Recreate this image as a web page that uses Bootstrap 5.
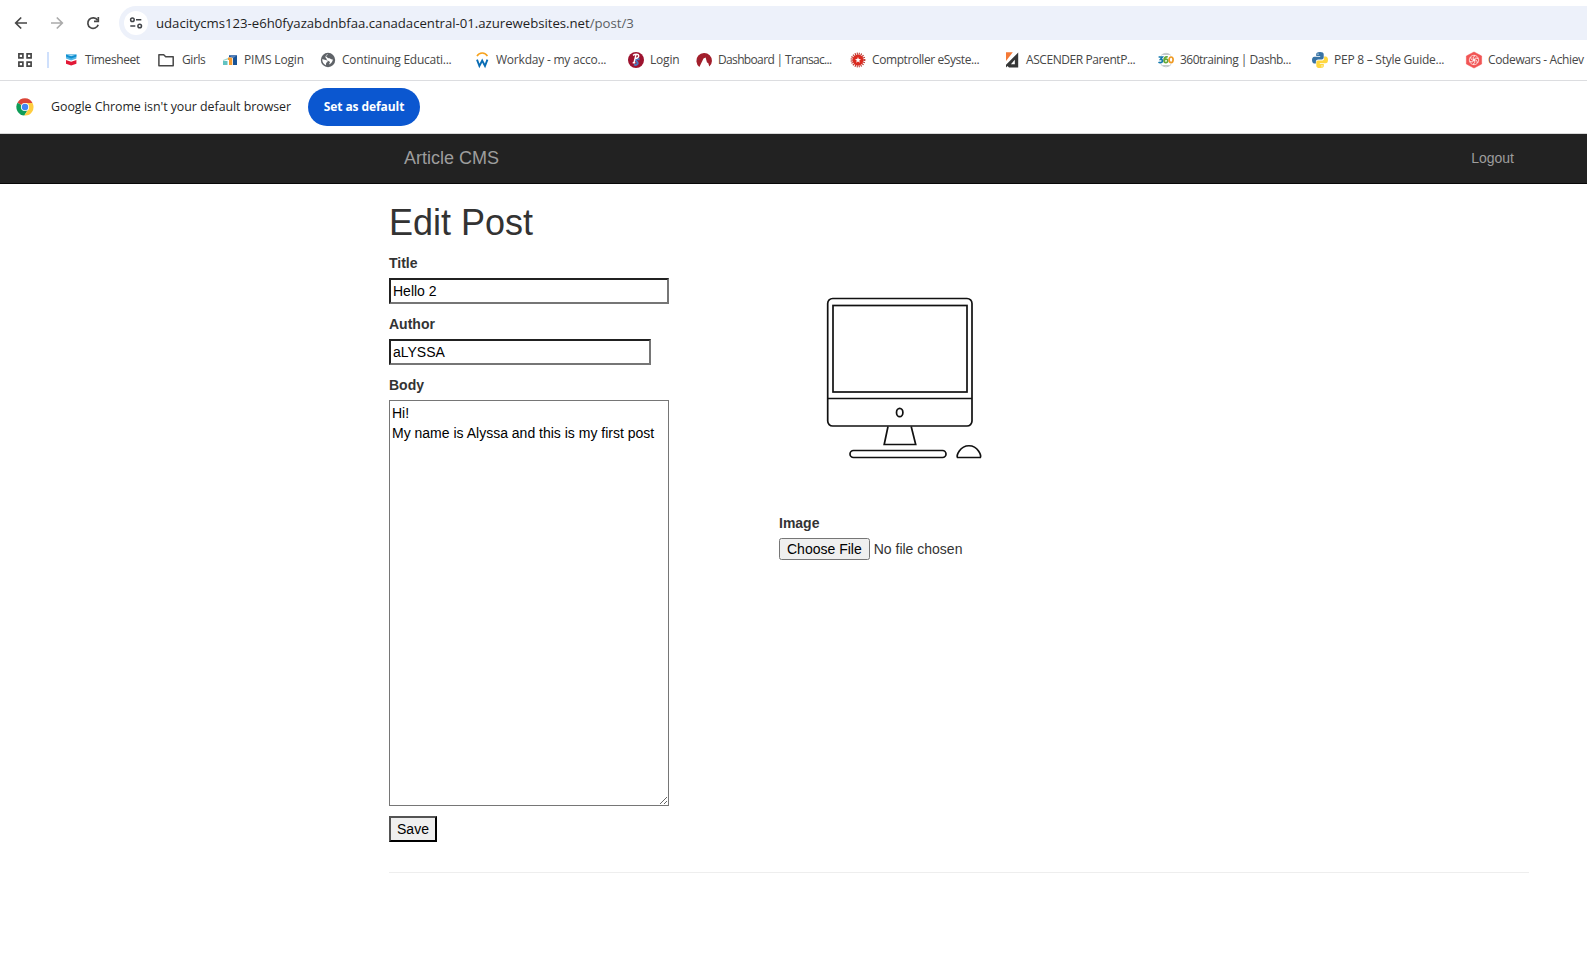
<!DOCTYPE html>
<html lang="en">
<head>
<meta charset="utf-8">
<meta name="viewport" content="width=device-width, initial-scale=1">
<title>Edit Post</title>
<link href="https://cdn.jsdelivr.net/npm/bootstrap@5.3.0/dist/css/bootstrap.min.css" rel="stylesheet">
<style>
body{font-family:"Liberation Sans",Arial,sans-serif;font-size:14px;line-height:20px;color:#333;background:#fff;overflow:hidden}
svg{display:block;overflow:visible;flex:none}
.chrome-ui{font-family:"Open Sans","Noto Sans",sans-serif;color:#1f1f1f}
.toolbar{height:46px;padding:0 0 0 14px}
.nav-icons{width:105px}
.omnibox{height:34px;background:#edf1fa;border-radius:17px 0 0 17px;padding-left:5px;font-size:13.2px}
.site-info{width:24px;height:24px;margin-right:8px}
.url-text{letter-spacing:-.02px}
.url-path{color:#5b5e63}
.bookmarks{height:35px;padding:0 0 7px 17px;border-bottom:1px solid #dcdde0;font-size:12px;color:#474747}
.apps-slot{width:46px;flex:none}
.apps-slot i{width:2px;height:16px;background:#cfe0fc;margin-left:14px}
.bm{gap:6px;flex:none;width:154px}
.bm-97{width:97px}.bm-62{width:62px}.bm-98{width:98px}.bm-68{width:68px}.bm-last{width:120px}
#b1{letter-spacing:-.4px}#b2{letter-spacing:-.4px}#b3{letter-spacing:-.15px}#b4{letter-spacing:-.25px}#b5{letter-spacing:-.22px}#b6{letter-spacing:-.2px}
#b7{letter-spacing:-.65px}#b8{letter-spacing:-.42px}#b9{letter-spacing:-.42px}#b10{letter-spacing:-.5px}#b11{letter-spacing:-.25px}#b12{letter-spacing:-.37px}
.infobar{height:53px;border-bottom:1px solid #d8d8d8;padding-left:16px;font-size:12.400px}
.infobar-text{margin:0 0 0 17px;width:257px;letter-spacing:-.04px}
.default-btn{height:38px;width:112px;background:#0b57d0;color:#fff;font-size:12px;letter-spacing:-.08px;font-weight:700;padding:0}
.site-nav{height:50px;background:#222;border-bottom:1px solid #080808;color:#9d9d9d;padding:0 0 2px}
.page-wrap{width:1170px;margin-left:374px;padding:0 15px}
.brand-text{font-size:18px;color:#9d9d9d;margin:0 0 0 15px;padding:0;line-height:20px}
.site-nav a:not(.brand-text){color:#9d9d9d;margin-right:15px}
h1.page-title{font-size:36px;line-height:39px;font-weight:400;margin:19px 0 11px}
.form-row{--bs-gutter-x:30px}
.lbl{display:block;font-weight:700;margin-bottom:5px;height:20px}
.field{display:block;height:26px;border:2px inset #767676;padding:1px 2px;color:#000;background:#fff;margin-bottom:10px}
.f-title{width:280px}.f-author{width:262px}
.f-body{display:block;width:280px;height:406px;border:1px solid #767676;padding:2px;color:#000;margin-bottom:10px;resize:both}
.save{height:26px;width:48px;border:2px outset #000;background:#efefef;color:#000;padding:0}
.file-pick{line-height:16px}
.end-rule{margin:30px 0 0;border-top:1px solid #eee;opacity:1}
</style>
<script src="https://cdn.jsdelivr.net/npm/bootstrap@5.3.0/dist/js/bootstrap.bundle.min.js"></script>
</head>
<body>
<header class="chrome-ui">
  <div class="toolbar d-flex align-items-center">
    <div class="nav-icons d-flex align-items-center">
      <svg width="14" height="14" viewBox="0 0 14 14" fill="none" stroke="#474747" stroke-width="1.7"><path d="M13 7H2M7.2 1.5L1.7 7l5.5 5.5"/></svg>
      <svg class="ms-4" width="14" height="14" viewBox="2 0 14 14" fill="none" stroke="#ababab" stroke-width="1.7"><path d="M1 7h11M6.8 1.5L12.3 7l-5.5 5.5"/></svg>
      <svg class="ms-4" width="14" height="14" viewBox="4 0 14 14" fill="none" stroke="#474747" stroke-width="1.7"><path d="M11.6 4.2A5.3 5.3 0 1 0 12.2 8.7"/><path d="M12.3 1v4.3H8"/></svg>
    </div>
    <div class="omnibox flex-grow-1 d-flex align-items-center">
      <span class="site-info rounded-circle bg-white d-flex align-items-center justify-content-center">
        <svg width="14" height="14" viewBox="0 0 14 14" fill="none" stroke="#404348" stroke-width="1.5"><circle cx="3.4" cy="3.7" r="1.8"/><path d="M7 3.7h5.3M1.3 10h5"/><circle cx="10.7" cy="10" r="1.8"/></svg>
      </span>
      <span class="url-text text-nowrap">udacitycms123-e6h0fyazabdnbfaa.canadacentral-01.azurewebsites.net<span class="url-path">/post/3</span></span>
    </div>
  </div>
  <nav class="bookmarks d-flex align-items-center text-nowrap overflow-hidden">
    <span class="apps-slot d-flex align-items-center">
      <svg width="16" height="16" viewBox="0 0 16 16" fill="none" stroke="#474747" stroke-width="1.7"><path d="M1.9 1.9h4v4h-4zM10.1 1.9h4v4h-4zM1.9 10.1h4v4h-4zM10.1 10.1h4v4h-4z"/></svg>
      <i class="d-block"></i>
    </span>
    <span class="bm bm-97 d-flex align-items-center">
      <svg width="16" height="16" viewBox="0 0 16 16"><path d="M3 2.500h10.400V6.500L8.200 8.500 3 6.500z" fill="#54b5e5"/><path d="M3 2.500h10.400V4.500L8.200 6.500 3 4.500z" fill="#0f8fd0"/><path d="M3 2.500h10.400L8.200 4.300z" fill="#a9daf2"/><path d="M3 8l5.200 1.800L13.400 8v3.800L8.200 13.500 3 11.800z" fill="#e21836"/></svg>
      <span id="b1">Timesheet</span></span>
    <span class="bm bm-62 d-flex align-items-center">
      <svg width="16" height="16" viewBox="2 0 16 16" fill="none" stroke="#474747" stroke-width="1.5" stroke-linejoin="round"><path d="M.9 2.7h4.8l2 2h7.5v9H.9z"/></svg>
      <span id="b2">Girls</span></span>
    <span class="bm bm-98 d-flex align-items-center">
      <svg width="16" height="16" viewBox="0 0 16 16"><path d="M1 9h4.5v4H1z" fill="#62c3c2"/><path d="M1 8l5-2v1.4L1 9z" fill="#a1d8cf"/><path d="M6 5.5h4.3V13H7V8H6z" fill="#f59c32"/><path d="M7 3.2h8V13h-4V5.2H7z" fill="#175397"/><path d="M7 3.2h8l-4 3z" fill="#5581bb"/></svg>
      <span id="b3">PIMS Login</span></span>
    <span class="bm d-flex align-items-center">
      <svg width="16" height="16" viewBox="0 0 16 16"><circle cx="8" cy="8" r="7.2" fill="#5f6368"/><path d="M2.2 7.3c2-.2 2.8.8 4.4 1 1.7.3 1.2 1.8 0 2.2-.8.3-.3 1.5-.7 2.8-2.1-.9-3.8-3.1-3.7-6zM8 2.200c-.2 1-1.600.8-1.900 1.900-.1.8.8.8 1.200 1.300.6.8 1.900.5 2.800 1.200.8.6 2.1 1.1 2.8 1-.2 2.2-1.9 4.3-4 5 .4-1.600 1.400-1.800.9-2.900-1-.9-2.600-.9-3-2-.4-1.200-.6-1.800-1.500-2.400C5.600 3.600 6.500 2.500 8 2.200z" fill="#fff"/></svg>
      <span id="b4">Continuing Educati...</span></span>
    <span class="bm d-flex align-items-center">
      <svg width="16" height="16" viewBox="0 0 16 16" fill="none"><path d="M3 4.200a5.800 5.800 0 0 1 10.400 0" stroke="#f6a21d" stroke-width="1.500"/><path d="M3 7.600l2.400 6.400L8.200 8.500l2.800 5.500 2.400-6.400" stroke="#086cb4" stroke-width="1.900"/></svg>
      <span id="b5">Workday - my acco...</span></span>
    <span class="bm bm-68 d-flex align-items-center">
      <svg width="16" height="16" viewBox="0 0 16 16" fill="none"><circle cx="8" cy="8" r="8" fill="#9d132f"/><path d="M11.5 7.5c-2.8-1-4.5.3-3 1.8 2.5 1.7.8 4.4-2.6 3.3" stroke="#4a78bd" stroke-width="2"/><path d="M5 3.4c2-1.5 5.6-1.6 5.8.3.1 2-2.3 2.8-4 2.5M8 2.7l-2 8M4.7 10.7h2.6" stroke="#fff" stroke-width="1.4"/></svg>
      <span id="b6">Login</span></span>
    <span class="bm d-flex align-items-center">
      <svg width="16" height="16" viewBox="0 0 16 16"><path d="M3.400 14.900A7.800 7.800 0 1 1 13.300 14.600L12.200 11 11 10.500 9.600 5.500 7.500 6.500z" fill="#a21f2c"/></svg>
      <span id="b7">Dashboard | Transac...</span></span>
    <span class="bm d-flex align-items-center">
      <svg width="16" height="16" viewBox="0 0 16 16"><circle cx="8" cy="8" r="6.300" fill="none" stroke="#b83028" stroke-width="2.200" stroke-dasharray="1 .98"/><circle cx="8" cy="8" r="5.500" fill="#db2b20"/><path d="M8 5l.8 2 2.200.2-1.700 1.400.5 2.100L8 9.600l-1.800 1.100.5-2.100L5 7.200 7.200 7z" fill="#fff"/></svg>
      <span id="b8">Comptroller eSyste...</span></span>
    <span class="bm d-flex align-items-center">
      <svg width="16" height="16" viewBox="0 0 16 16"><path d="M2 .3h6.800L2 9z" fill="#f47936"/><path d="M14.200.500v15H5L3.500 14 2 15.500V12.800z" fill="#363737"/><path d="M10.800 7.800v4.400H6.900z" fill="#fff"/></svg>
      <span id="b9">ASCENDER ParentP...</span></span>
    <span class="bm d-flex align-items-center">
      <svg width="16" height="16" viewBox="0 0 16 16" fill="none"><path d="M3.300 3.200a6.800 6.800 0 0 1 9.400 0M2.800 12.400a6.800 6.800 0 0 0 10.400 0M5 2.500h6M5 13.500h6" stroke="#c3c9cc"/><path d="M.6 5h3.700L2.500 7.400c3.200.1 2.200 3.400-.4 3.200-.7 0-1.200-.2-1.600-.5" stroke="#1479ae" stroke-width="1.700"/><path d="M9.700 4.900C7 4.300 6 6.200 6 8.400c0 3 3.800 2.800 3.800.4 0-2-2.700-2.200-3.700-.3" stroke="#63a93b" stroke-width="1.700"/><ellipse cx="13.100" cy="7.800" rx="2" ry="2.800" stroke="#ef9a24" stroke-width="1.700"/></svg>
      <span id="b10">360training | Dashb...</span></span>
    <span class="bm d-flex align-items-center">
      <svg width="16" height="16" viewBox="0 0 16 16"><path d="M8 0C5 0 4.200 1 4.200 2.300V4h4v.7H2.400C.8 4.700 0 6 0 8s.8 3.400 2.300 3.400h1.600V9.600c0-1.300 1-2.200 2.300-2.200h3.700c1 0 1.800-.8 1.800-1.800V2.300C11.700.8 10.500 0 8 0z" fill="#3873a5"/><path d="M8 16c3 0 3.800-1 3.800-2.300V12h-4v-.7h5.800C15.200 11.300 16 10 16 8s-.8-3.400-2.300-3.400h-1.600v1.800c0 1.300-1 2.200-2.300 2.200H6.100c-1 0-1.800.8-1.800 1.800v3.300C4.300 15.200 5.500 16 8 16z" fill="#ffd73f"/><circle cx="6" cy="2.100" r=".7" fill="#fff"/><circle cx="10" cy="13.900" r=".7" fill="#fff"/></svg>
      <span id="b11">PEP 8 – Style Guide...</span></span>
    <span class="bm bm-last d-flex align-items-center">
      <svg width="16" height="16" viewBox="0 0 16 16" fill="none"><path d="M8 0l7.600 4v8L8 16 .4 12V4z" fill="#f15454" stroke="#f15454" stroke-width=".6" stroke-linejoin="round"/><circle cx="8" cy="8" r="4.700" stroke="#ffd9d7" stroke-width=".9"/><path d="M8 8C6.500 6.500 7.200 4.600 9 3.600M8 8c.5-2 2.500-2.400 4.200-1.400M8 8c2-.6 3.400.9 3.200 2.900M8 8c1.500 1.500.8 3.400-1 4.400M8 8c-.5 2-2.500 2.400-4.200 1.400M8 8c-2 .6-3.400-.9-3.200-2.900" stroke="#fff" stroke-width=".9"/></svg>
      <span id="b12">Codewars - Achiev</span></span>
  </nav>
  <div class="infobar d-flex align-items-center">
    <svg width="18" height="18" viewBox="0 0 18 18"><path d="M9 9L1.500 4.700A8.500 8.500 0 0 1 16.500 5H9z" fill="#db4437"/><path d="M9 9L1.500 4.700A8.500 8.500 0 0 0 8.300 17.500L12.300 11z" fill="#0f9d58"/><path d="M9 5h7.500A8.500 8.500 0 0 1 8.300 17.500L12.500 11z" fill="#ffcd40"/><circle cx="9" cy="9" r="4.100" fill="#fff"/><circle cx="9" cy="9" r="3.200" fill="#4285f4"/></svg>
    <span class="infobar-text text-nowrap">Google Chrome isn't your default browser</span>
    <button class="default-btn btn rounded-pill border-0" type="button">Set as default</button>
  </div>
</header>
<nav class="site-nav navbar">
  <div class="page-wrap d-flex justify-content-between align-items-center">
    <a class="brand-text navbar-brand" href="#">Article CMS</a>
    <a class="text-decoration-none" href="#">Logout</a>
  </div>
</nav>
<main class="page-wrap">
  <h1 class="page-title">Edit Post</h1>
  <form>
    <div class="row form-row">
      <div class="col-4">
        <label class="lbl" for="title">Title</label>
        <input class="field f-title" id="title" type="text" value="Hello 2">
        <label class="lbl" for="author">Author</label>
        <input class="field f-author" id="author" type="text" value="aLYSSA">
        <label class="lbl" for="body">Body</label>
        <textarea class="f-body" id="body">Hi!
My name is Alyssa and this is my first post</textarea>
        <button class="save" type="button">Save</button>
      </div>
      <div class="col-4">
        <svg width="240" height="260" viewBox="779 253 240 260" fill="none" stroke="#111" stroke-width="1.700" role="img" aria-label="Desktop computer">
          <rect x="827.700" y="298.500" width="144.300" height="127.500" rx="5"/>
          <rect x="833" y="305.500" width="134" height="86.500"/>
          <path d="M828 398.500h144M888 426.500l-3.800 18h31.500l-4.500-18"/>
          <ellipse cx="899.700" cy="412.500" rx="3.200" ry="4.200"/>
          <rect x="850" y="450.500" width="96" height="7" rx="3.500"/>
          <path d="M957.500 457.500h22.800q1.200-2-1.800-6.500c-4.500-7-14.500-7-19.200 0q-3 4.500-1.800 6.500z"/>
        </svg>
        <label class="lbl" for="image">Image</label>
        <input class="file-pick d-block" id="image" type="file">
      </div>
    </div>
  </form>
  <hr class="end-rule">
</main>
</body>
</html>
